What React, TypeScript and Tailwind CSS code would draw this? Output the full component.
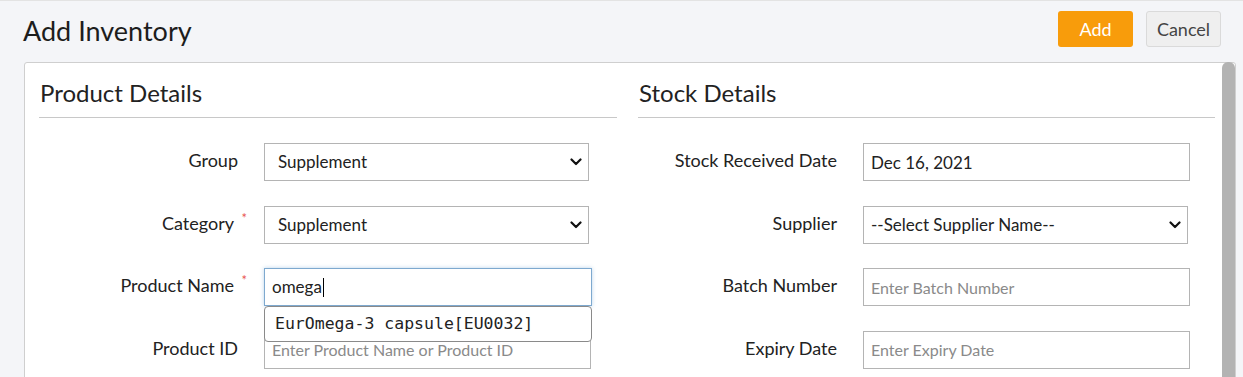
import React from 'react';

const Chevron = () => (
  <svg width="12" height="8" viewBox="0 0 12 8" className="pointer-events-none absolute right-[7px] top-1/2 -translate-y-1/2">
    <path d="M1.5 1.5 6 6l4.5-4.5" fill="none" stroke="#111" strokeWidth="2.2" strokeLinecap="round" strokeLinejoin="round" />
  </svg>
);

const Label: React.FC<{ text: string; required?: boolean }> = ({ text, required }) => (
  <div className="w-[200px] shrink-0 text-right pb-[3px]">
    <span className={`relative text-[18px] text-[#222] ${required ? 'mr-[5px]' : 'mr-[1px]'}`}>
      {text}
      {required && <span className="absolute -right-[13px] -top-[3px] text-[13px] text-[#e8564f]">*</span>}
    </span>
  </div>
);

const SelectBox: React.FC<{ value: string; pad?: string; width?: string }> = ({ value, pad = 'pl-[13px]', width = 'w-[325px]' }) => (
  <div className={`relative ${width} h-[38px] ml-[25px]`}>
    <select
      defaultValue={value}
      className={`appearance-none w-full h-full border border-[#b4b4b4] bg-white ${pad} text-[17px] text-[#222] outline-none`}
    >
      <option>{value}</option>
    </select>
    <Chevron />
  </div>
);

const TextBox: React.FC<{ value?: string; placeholder?: string }> = ({ value, placeholder }) => (
  <input
    readOnly
    defaultValue={value}
    placeholder={placeholder}
    className="ml-[25px] w-[327px] h-[38px] border border-[#b4b4b4] bg-white pl-[7px] text-[17px] text-[#222] placeholder:text-[#8a8a8a] placeholder:text-[16px] outline-none"
  />
);

const Section: React.FC<{ title: string; children: React.ReactNode }> = ({ title, children }) => (
  <div>
    <div className="pt-[15px] pb-[9px] border-b border-[#c8c8c8] pl-[1px]">
      <h2 className="text-[24px] leading-[30px] text-[#222]">{title}</h2>
    </div>
    <div className="mt-[25px] flex flex-col gap-[24.6px]">{children}</div>
  </div>
);

export default function App() {
  return (
    <div className="h-[377px] overflow-hidden bg-[#f4f5f8] border-t border-[#e3e3e3] font-['Lato',sans-serif]">
      <div className="flex justify-between h-[61px]">
        <h1 className="pl-[23px] pt-[13px] text-[27px] leading-[34px] text-[#1d1d1d]">Add Inventory</h1>
        <div className="flex gap-[13px] mt-[10px] mr-[22px] h-[36px]">
          <button className="w-[75px] rounded-[3px] bg-[#f89c0b] text-white text-[18px]">Add</button>
          <button className="w-[75px] rounded-[3px] bg-[#efefef] border border-[#dadada] text-[#444] text-[18px]">Cancel</button>
        </div>
      </div>

      <div className="ml-[24px] w-[1212px] h-[400px] bg-white border border-[#cfcfcf] rounded-t-[3px] flex">
        <div className="flex-1 pl-[14px] pr-[7px] grid grid-cols-[578px_577px] gap-[21px]">
          <Section title="Product Details">
            <div className="flex items-center">
              <Label text="Group" />
              <SelectBox value="Supplement" />
            </div>
            <div className="flex items-center">
              <Label text="Category" required />
              <SelectBox value="Supplement" />
            </div>
            <div className="flex items-center">
              <Label text="Product Name" required />
              <div className="relative ml-[25px] w-[328px] h-[38px]">
                <div className="w-full h-full border border-[#7ea9cf] shadow-[0_0_4px_rgba(102,160,210,0.45)] bg-white pl-[7px] flex items-center text-[17px] text-[#222]">
                  omega<span className="inline-block w-[1px] h-[19px] bg-black ml-[1px]" />
                </div>
                <div className="absolute left-0 top-[38px] z-10 w-[328px] h-[36px] bg-white border border-[#8a8a8a] rounded-[4px] pl-[10px] flex items-center text-[16.5px] text-[#222] font-['DejaVu_Sans_Mono',monospace]">
                  EurOmega-3 capsule[EU0032]
                </div>
              </div>
            </div>
            <div className="flex items-center">
              <Label text="Product ID" />
              <TextBox placeholder="Enter Product Name or Product ID" />
            </div>
          </Section>
          <Section title="Stock Details">
            <div className="flex items-center">
              <Label text="Stock Received Date" />
              <TextBox value="Dec 16, 2021" />
            </div>
            <div className="flex items-center">
              <Label text="Supplier" />
              <SelectBox value="--Select Supplier Name--" pad="pl-[7px]" />
            </div>
            <div className="flex items-center">
              <Label text="Batch Number" />
              <TextBox placeholder="Enter Batch Number" />
            </div>
            <div className="flex items-center">
              <Label text="Expiry Date" />
              <TextBox placeholder="Enter Expiry Date" />
            </div>
          </Section>
        </div>
        <div className="w-[13px] shrink-0 -mt-[1px] bg-[#b3b3b3] rounded-t-[6px]" />
      </div>
    </div>
  );
}
